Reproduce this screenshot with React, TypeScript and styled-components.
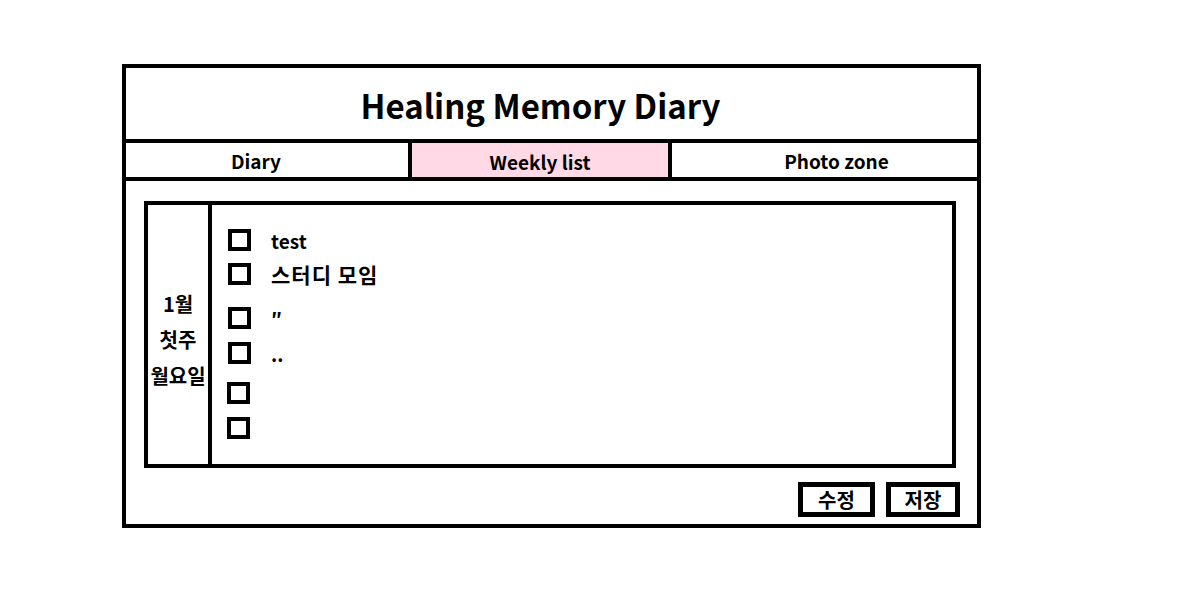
import React from "react";
import styled, { createGlobalStyle } from "styled-components";

const Global = createGlobalStyle`
  html, body { margin: 0; padding: 0; background: #fff; }
  body { font-family: "Noto Sans CJK KR", "Noto Sans", sans-serif; color: #000; }
  * { box-sizing: border-box; }
`;

const Page = styled.div`
  padding: 64px 0 0 122px;
`;

const Frame = styled.div`
  width: 859px;
  height: 464px;
  border: 4px solid #000;
  display: flex;
  flex-direction: column;
`;

const TitleBar = styled.header`
  height: 71px;
  display: flex;
  align-items: center;
  justify-content: center;
  padding: 4px 22px 0 0;
`;

const Title = styled.h1`
  margin: 0;
  font-size: 33px;
  font-weight: 700;
  line-height: 1;
`;

const Tabs = styled.nav`
  display: grid;
  grid-template-columns: 282px 260px 309px;
  height: 42px;
  border-top: 4px solid #000;
  border-bottom: 4px solid #000;
`;

const Tab = styled.div<{ $active?: boolean; $divider?: boolean; $shift?: number }>`
  display: flex;
  align-items: center;
  justify-content: center;
  border-left: ${(p) => (p.$divider ? "4px solid #000" : "none")};
  background: ${(p) => (p.$active ? "#ffd9e5" : "#fff")};
  font-size: 19px;
  font-weight: 700;
  padding-left: ${(p) => Math.max(0, (p.$shift ?? 0) * 2)}px;
  padding-right: ${(p) => Math.max(0, -(p.$shift ?? 0) * 2)}px;
  padding-top: ${(p) => (p.$active ? 3 : 0)}px;
`;

const Content = styled.main`
  flex: 1;
  display: flex;
  flex-direction: column;
  padding: 20px 17px 0 18px;
`;

const WeekBox = styled.section`
  height: 267px;
  margin-right: 4px;
  border: 4px solid #000;
  display: grid;
  grid-template-columns: 64px 1fr;
`;

const DateCol = styled.div`
  border-right: 4px solid #000;
  display: flex;
  flex-direction: column;
  align-items: center;
  justify-content: center;
  padding-top: 10px;
  font-size: 20px;
  font-weight: 700;
  line-height: 36px;
  white-space: nowrap;
`;

const List = styled.ul`
  list-style: none;
  margin: 0;
  padding: 24px 0 0 16px;
`;

const Row = styled.li<{ $gap: number; $x?: number }>`
  display: flex;
  align-items: center;
  height: 22px;
  margin-top: ${(p) => p.$gap}px;
  margin-left: ${(p) => p.$x ?? 0}px;
`;

const Check = styled.span`
  width: 23px;
  height: 22px;
  border: 4.5px solid #000;
  flex: none;
`;

const ItemText = styled.span<{ $weight?: number; $size?: number; $spacing?: number }>`
  margin-left: 20px;
  font-size: ${(p) => p.$size ?? 19}px;
  font-weight: ${(p) => p.$weight ?? 700};
  letter-spacing: ${(p) => p.$spacing ?? 0}px;
  line-height: 1;
`;

const Footer = styled.div`
  display: flex;
  justify-content: flex-end;
  gap: 11px;
  padding-top: 14px;
`;

const Button = styled.button<{ $w: number }>`
  width: ${(p) => p.$w}px;
  height: 35px;
  border: 5px solid #000;
  background: #fff;
  font-family: "Noto Sans CJK KR", sans-serif;
  font-size: 20px;
  font-weight: 600;
  line-height: 1;
  padding: 0;
  color: #000;
`;

const items: {
  text: string;
  gap: number;
  weight?: number;
  size?: number;
  spacing?: number;
  x?: number;
}[] = [
  { text: "test", gap: 0 },
  { text: "스터디 모임", gap: 12, weight: 600, size: 21, spacing: 1 },
  { text: "″", gap: 22 },
  { text: "..", gap: 13 },
  { text: "", gap: 18, x: -1 },
  { text: "", gap: 13, x: -1 },
];

export default function App() {
  return (
    <>
      <Global />
      <Page>
        <Frame>
          <TitleBar>
            <Title>Healing Memory Diary</Title>
          </TitleBar>
          <Tabs>
            <Tab $shift={-11}>Diary</Tab>
            <Tab $divider $active>Weekly list</Tab>
            <Tab $divider $shift={12}>Photo zone</Tab>
          </Tabs>
          <Content>
            <WeekBox>
              <DateCol>
                <span>1월</span>
                <span>첫주</span>
                <span>월요일</span>
              </DateCol>
              <List>
                {items.map((it, i) => (
                  <Row key={i} $gap={it.gap} $x={it.x}>
                    <Check />
                    {it.text && (
                      <ItemText $weight={it.weight} $size={it.size} $spacing={it.spacing}>
                        {it.text}
                      </ItemText>
                    )}
                  </Row>
                ))}
              </List>
            </WeekBox>
            <Footer>
              <Button $w={77}>수정</Button>
              <Button $w={74}>저장</Button>
            </Footer>
          </Content>
        </Frame>
      </Page>
    </>
  );
}
